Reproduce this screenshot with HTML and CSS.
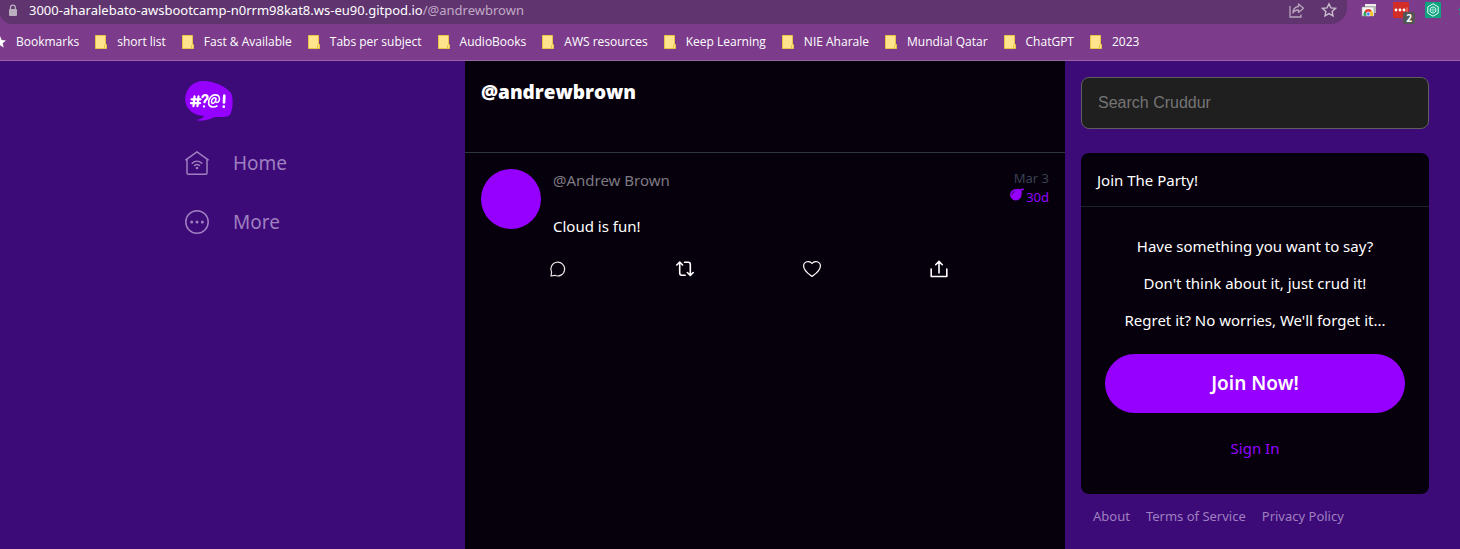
FILE: index.html
```
<!DOCTYPE html>
<html lang="en">
<head>
<meta charset="utf-8">
<meta name="viewport" content="width=device-width, initial-scale=1">
<title>Cruddur - @andrewbrown</title>
<link rel="stylesheet" href="styles.css">
</head>
<body>
<svg class="defs" aria-hidden="true">
  <symbol id="folder" viewBox="0 0 12 14"><path d="M.5.5h10v9h1v4H.5z" fill="#ffe48d" stroke="#eac545"/><path d="M9.500 13v-3" stroke="#eac545" fill="none"/></symbol>
</svg>

<header class="browser">
  <div class="toolbar">
    <div class="address">
      <svg class="lock" viewBox="0 0 10 13" aria-hidden="true"><path d="M2.500 6V3.500a2.300 2.300 0 0 1 4.800 0V6" fill="none" stroke="#b9afbf" stroke-width="1.300"/><rect x="1" y="5" width="8" height="7" rx="1" fill="#b9afbf"/></svg>
      <span class="url">3000-aharalebato-awsbootcamp-n0rrm98kat8.ws-eu90.gitpod.io<span class="path">/@andrewbrown</span></span>
      <button class="tool" aria-label="Share"><svg width="16" height="16" viewBox="0 0 16 16" fill="none" stroke="#b7a5bc" stroke-width="1.300"><path d="M1 4v11h11v-2.500"/><path d="M9.500 2l5 4.200-5 4.200V8C6.800 8 5 8.800 3.800 11c.2-3.500 2-6 5.700-6.500z" stroke-linejoin="round"/></svg></button>
      <button class="tool" aria-label="Bookmark this page"><svg width="16" height="16" viewBox="0 0 16 16" fill="none" stroke="#c9bccd" stroke-width="1.400"><path d="M8 1.800l1.900 4.100 4.500.5-3.300 3 .9 4.400L8 11.600l-4 2.200.9-4.400-3.300-3 4.500-.5z"/></svg></button>
    </div>
    <button class="ext" aria-label="Tab extension"><svg width="16" height="16" viewBox="0 0 16 16"><path d="M4 2h11v9H4z" fill="#b9b9b9"/><path d="M4 2h11v2H4z" fill="#eee"/><path d="M1 5h12v9H1z" fill="#f6f6f6" stroke="#999" stroke-width=".6"/><path d="M2.500 13.700C2.300 11.500 3 9.500 4.300 8.500l3 5.200z" fill="#25a55a"/><path d="M3.500 9.200c2-2.900 6-2.700 7.600 0l-3.800 1.300-2 .8z" fill="#e34133"/><path d="M11 9.200c1 1.200 1.200 3 .8 4.500H8l1-4.300z" fill="#fbc116"/><circle cx="7.300" cy="12" r="1.900" fill="#4285f4" stroke="#fff" stroke-width=".7"/></svg></button>
    <button class="ext" aria-label="Password extension, 2"><svg width="16" height="16" viewBox="0 0 16 16"><rect width="16" height="16" rx="1" fill="#d32d27"/><g fill="#fff"><circle cx="3" cy="8" r="1.400"/><circle cx="7" cy="8" r="1.400"/><circle cx="11" cy="8" r="1.400"/></g><path d="M14 5.500v5" stroke="#ee8b85"/></svg><span class="count">2</span></button>
    <button class="ext" aria-label="Chat extension"><svg width="16" height="16" viewBox="0 0 16 16" fill="none" stroke="#e6fff6"><rect width="16" height="16" rx="1" fill="#10a37f" stroke="none"/><path d="M8 1.800l5.200 3v6.400L8 14.200l-5.200-3V4.800z"/><path d="M8 4.800l2.800 1.600v3.200L8 11.200 5.200 9.600V6.400z"/><circle cx="8" cy="8" r="1.200" stroke-width=".6"/></svg></button>
    <button class="ext" aria-label="More extensions"><svg width="16" height="16" viewBox="0 0 16 16"><path d="M4 3.500L1.500 8l2 .5L2 12.500h3V3z" fill="#11a080"/></svg></button>
  </div>
  <nav class="bookmarks" aria-label="Bookmarks">
    <a href="#"><svg class="star" viewBox="0 0 12 12" aria-hidden="true"><path d="M6 0l1.700 4 4.300.4L8.700 7.200l1 4.300L6 9.200l-3.700 2.300 1-4.300L0 4.400 4.300 4z" fill="#fff"/></svg>Bookmarks</a>
    <a href="#"><svg class="folder" aria-hidden="true"><use href="#folder"/></svg>short list</a>
    <a href="#"><svg class="folder" aria-hidden="true"><use href="#folder"/></svg>Fast &amp; Available</a>
    <a href="#"><svg class="folder" aria-hidden="true"><use href="#folder"/></svg>Tabs per subject</a>
    <a href="#"><svg class="folder" aria-hidden="true"><use href="#folder"/></svg>AudioBooks</a>
    <a href="#"><svg class="folder" aria-hidden="true"><use href="#folder"/></svg>AWS resources</a>
    <a href="#"><svg class="folder" aria-hidden="true"><use href="#folder"/></svg>Keep Learning</a>
    <a href="#"><svg class="folder" aria-hidden="true"><use href="#folder"/></svg>NIE Aharale</a>
    <a href="#"><svg class="folder" aria-hidden="true"><use href="#folder"/></svg>Mundial Qatar</a>
    <a href="#"><svg class="folder" aria-hidden="true"><use href="#folder"/></svg>ChatGPT</a>
    <a href="#"><svg class="folder" aria-hidden="true"><use href="#folder"/></svg>2023</a>
  </nav>
</header>

<div class="app">
  <div class="left">
    <nav class="menu" aria-label="Main">
      <svg class="logo" viewBox="0 0 48 40" role="img" aria-label="Cruddur">
        <path d="M18 0C30 .5 40 5 46 12c2.500 5 2 15-.5 21C43 37 36 36 30 36c-5 2-12 5-19 3 4-.5 6-1.500 8.500-4C9 34.500 1 29 .2 19 0 8 8 0 18 0z" fill="#9500ff"/>
        <g fill="none" stroke="#fff" stroke-width="2.300" stroke-linecap="round" stroke-linejoin="round">
          <path d="M9.500 15.500L8.500 25M13.500 15.500l-1 9.500M6.500 18.300h9M6 22.200h9"/>
          <path d="M17.500 16c1.500-3 5.500-2 5 .8-.3 1.800-2.500 2-3 4.400M19 25.300v.2"/>
          <path d="M31 17.500c-2-2-4.500.5-4.500 3 0 2.500 2.500 3 4-.5l.5-2.500c-.5 2.500-.4 4 .8 4 2.200 0 3.200-3 2.400-5.200-1-3-6-3.300-8.500-.3-3.500 4-2.700 9.500 1.800 10 1.500.2 3-.2 4.500-1" stroke-width="1.600"/>
          <path d="M39.300 14.500L39 21.500M38.800 25.500v.2" stroke-width="2.700"/>
        </g>
      </svg>
      <a class="menu-item" href="#"><svg width="24" height="24" viewBox="0 0 24 24" fill="none" stroke="currentColor" stroke-width="1.500" stroke-linecap="round" stroke-linejoin="round" aria-hidden="true"><path d="M.8 8.800L12 .8l11.200 8M2 8v14c0 .8.400 1.200 1.200 1.200h17.600c.8 0 1.200-.4 1.200-1.200V8"/><path d="M7.200 12.200c2.800-2.500 6.800-2.500 9.600 0M9.500 14.500c1.500-1.200 3.500-1.200 5 0"/><circle cx="12" cy="17" r=".6" fill="currentColor"/></svg>Home</a>
      <a class="menu-item" href="#"><svg width="24" height="24" viewBox="0 0 24 24" fill="none" stroke="currentColor" stroke-width="1.500" aria-hidden="true"><circle cx="12" cy="12" r="11.200"/><g fill="currentColor" stroke="none"><circle cx="6.700" cy="12" r="1.500"/><circle cx="12" cy="12" r="1.500"/><circle cx="17.300" cy="12" r="1.500"/></g></svg>More</a>
    </nav>
  </div>

  <main class="feed">
    <div class="feed-head"><h1>@andrewbrown</h1></div>
    <article class="activity">
      <div class="activity-top">
        <div class="avatar"></div>
        <div class="activity-text">
          <div class="activity-meta">
            <a class="handle" href="#">@Andrew Brown</a>
            <div class="times">
              <time class="created">Mar 3</time>
              <span class="expires"><svg width="14" height="13" viewBox="0 0 14 13" aria-hidden="true"><circle cx="5.800" cy="6.800" r="5.700" fill="#9500ff"/><path d="M5.500 2.500L8.500.6l1.300.9 2.200-1 2 .2-.2 1.300-2.300.5.2 2.700L9.500 8z" fill="#9500ff"/><path d="M2 6.500C2.300 5 3.300 4 4.800 3.600" fill="none" stroke="#1d0438" stroke-width=".9"/></svg>30d</span>
            </div>
          </div>
          <p class="message">Cloud is fun!</p>
        </div>
      </div>
      <div class="actions">
        <button aria-label="Reply"><svg width="18" height="18" viewBox="0 0 18 18" fill="none" stroke="#e8e8e8" stroke-width="1.200" stroke-linejoin="round"><path d="M2 16l.6-3.800A6.900 6.900 0 1 1 5.800 15.300z"/></svg></button>
        <button aria-label="Repost"><svg width="18" height="18" viewBox="0 0 18 18" fill="none" stroke="#fff" stroke-width="1.600" stroke-linecap="round" stroke-linejoin="round"><path d="M.8 5L3.700 2l2.900 3M3.700 2.500V13c0 1.500.6 2.200 2.100 2.200h3.400M17.200 12.500l-2.900 3-2.900-3M14.300 15V4.500c0-1.500-.6-2.200-2.100-2.200H8.500"/></svg></button>
        <button aria-label="Like"><svg width="18" height="18" viewBox="0 0 18 18" fill="none" stroke="#fff" stroke-width="1.200" stroke-linejoin="round"><path d="M9 16.500C6.500 14.500.6 11 .6 6 .6 1.500 6.500 0 9 3.500 11.500 0 17.400 1.500 17.400 6c0 5-5.900 8.500-8.400 10.500z"/></svg></button>
        <button aria-label="Share activity"><svg width="18" height="18" viewBox="0 0 18 18" fill="none" stroke="#fff" stroke-width="1.600" stroke-linecap="round" stroke-linejoin="round"><path d="M1.200 9v7.500h15.600V9M9 13V1.500M5.700 4.700L9 1.400l3.300 3.300"/></svg></button>
      </div>
    </article>
  </main>

  <aside class="right">
    <input class="search" type="text" placeholder="Search Cruddur" aria-label="Search Cruddur">
    <section class="join">
      <h2>Join The Party!</h2>
      <div class="join-body">
        <p>Have something you want to say?</p>
        <p>Don't think about it, just crud it!</p>
        <p>Regret it? No worries, We'll forget it...</p>
        <a class="join-now" href="#">Join Now!</a>
        <a class="sign-in" href="#">Sign In</a>
      </div>
    </section>
    <footer class="links"><a href="#">About</a><a href="#">Terms of Service</a><a href="#">Privacy Policy</a></footer>
  </aside>
</div>
</body>
</html>
```
FILE: styles.css
```
* { box-sizing: border-box; }
body {
  margin: 0;
  min-height: 100vh;
  display: flex;
  flex-direction: column;
  background: #3c0b78;
  color: #fff;
  font: 15px/20px "Noto Sans", "Open Sans", sans-serif;
  overflow: hidden;
}
a { color: inherit; text-decoration: none; }
button { padding: 0; border: 0; background: none; font: inherit; color: inherit; }
svg { display: block; flex: none; }
h1, h2, p { margin: 0; }
.defs { position: absolute; width: 0; height: 0; }

.browser { background: #7c3c8b; border-bottom: 1px solid #9864a5; }
.toolbar { display: flex; align-items: flex-start; height: 24px; margin-right: -13px; }
.address {
  flex: 1;
  display: flex;
  align-items: center;
  height: 24px;
  padding: 0 10px 4px 8px;
  background: #60346f;
  border-radius: 0 0 16px 12px;
  font-size: 13px;
}
.lock { width: 10px; height: 13px; margin-right: 11px; }
.url { flex: 1; white-space: nowrap; }
.path { color: #c0a9c6; }
.tool { margin-left: 16px; }
.ext { position: relative; margin: 2px 0 0 16px; }
.ext:nth-child(2) { margin-left: 14px; }
.count {
  position: absolute;
  right: -6px;
  bottom: -6px;
  width: 12px;
  height: 12px;
  border-radius: 2px;
  background: #555;
  font: bold 10px/12px "Open Sans", sans-serif;
}
.bookmarks {
  display: flex;
  align-items: center;
  gap: 16px;
  height: 36px;
  margin-left: -6px;
  font-family: "Open Sans", "Noto Sans", sans-serif;
  font-size: 12px;
  white-space: nowrap;
}
.bookmarks a { display: flex; align-items: center; gap: 10px; }
.folder { width: 12px; height: 14px; }
.star { width: 12px; height: 12px; }

.app {
  flex: 1;
  display: grid;
  grid-template-columns: minmax(0, 465fr) minmax(0, 600px) minmax(0, 395fr);
}
.left { display: flex; justify-content: flex-end; }
.menu { width: 280px; padding-top: 20px; color: #9f7fc0; }
.logo { width: 48px; height: 40px; margin-bottom: 12px; }
.menu-item {
  display: flex;
  align-items: center;
  gap: 24px;
  height: 59px;
  font-size: 19px;
}

.feed { background: #06000c; }
.feed-head { height: 92px; padding: 19px 16px; border-bottom: 1px solid #2f3643; }
.feed-head h1 { font-family: "Open Sans", "Noto Sans", sans-serif; font-size: 19px; line-height: 24px; font-weight: 800; }
.activity { padding: 16px; }
.activity-top { display: flex; gap: 12px; }
.avatar { width: 60px; height: 60px; border-radius: 50%; background: #9500ff; }
.activity-text { flex: 1; }
.activity-meta { display: flex; justify-content: space-between; }
.handle { padding-top: 1px; color: #7d7a82; }
.times {
  display: flex;
  flex-direction: column;
  align-items: flex-end;
  font-size: 13px;
  line-height: 19px;
}
.created { color: #3b4152; }
.expires { display: flex; color: #9500ff; gap: 2px; }
.message { padding-top: 9px; }
.actions { display: flex; gap: 8px; padding: 24px 0 0 68px; }
.actions button { flex: 1; }

.right { padding: 16px 31px 16px 16px; }
.search {
  display: block;
  width: 100%;
  height: 52px;
  padding: 16px;
  border: 1px solid #5f5f5c;
  border-radius: 8px;
  background: #1f1f1f;
  color: #fff;
  font: 16px "Liberation Sans", Arial, sans-serif;
}
.search::placeholder { color: #757575; }
.join { margin-top: 24px; border-radius: 8px; background: #06000c; }
.join h2 {
  padding: 17px 16px 16px;
  border-bottom: 1px solid #1d232d;
  font-size: 15px;
  line-height: 20px;
  font-weight: 400;
}
.join-body {
  display: flex;
  flex-direction: column;
  gap: 17px;
  padding: 29px 24px 36px;
  text-align: center;
}
.join-now {
  margin-top: 7px;
  border-radius: 30px;
  background: #9500ff;
  font-size: 19px;
  font-weight: 600;
  line-height: 59px;
}
.sign-in { margin-top: 8px; color: #9500ff; }
.links {
  display: flex;
  gap: 16px;
  padding: 12px;
  color: #9f7fc0;
  font-size: 13px;
}
```
